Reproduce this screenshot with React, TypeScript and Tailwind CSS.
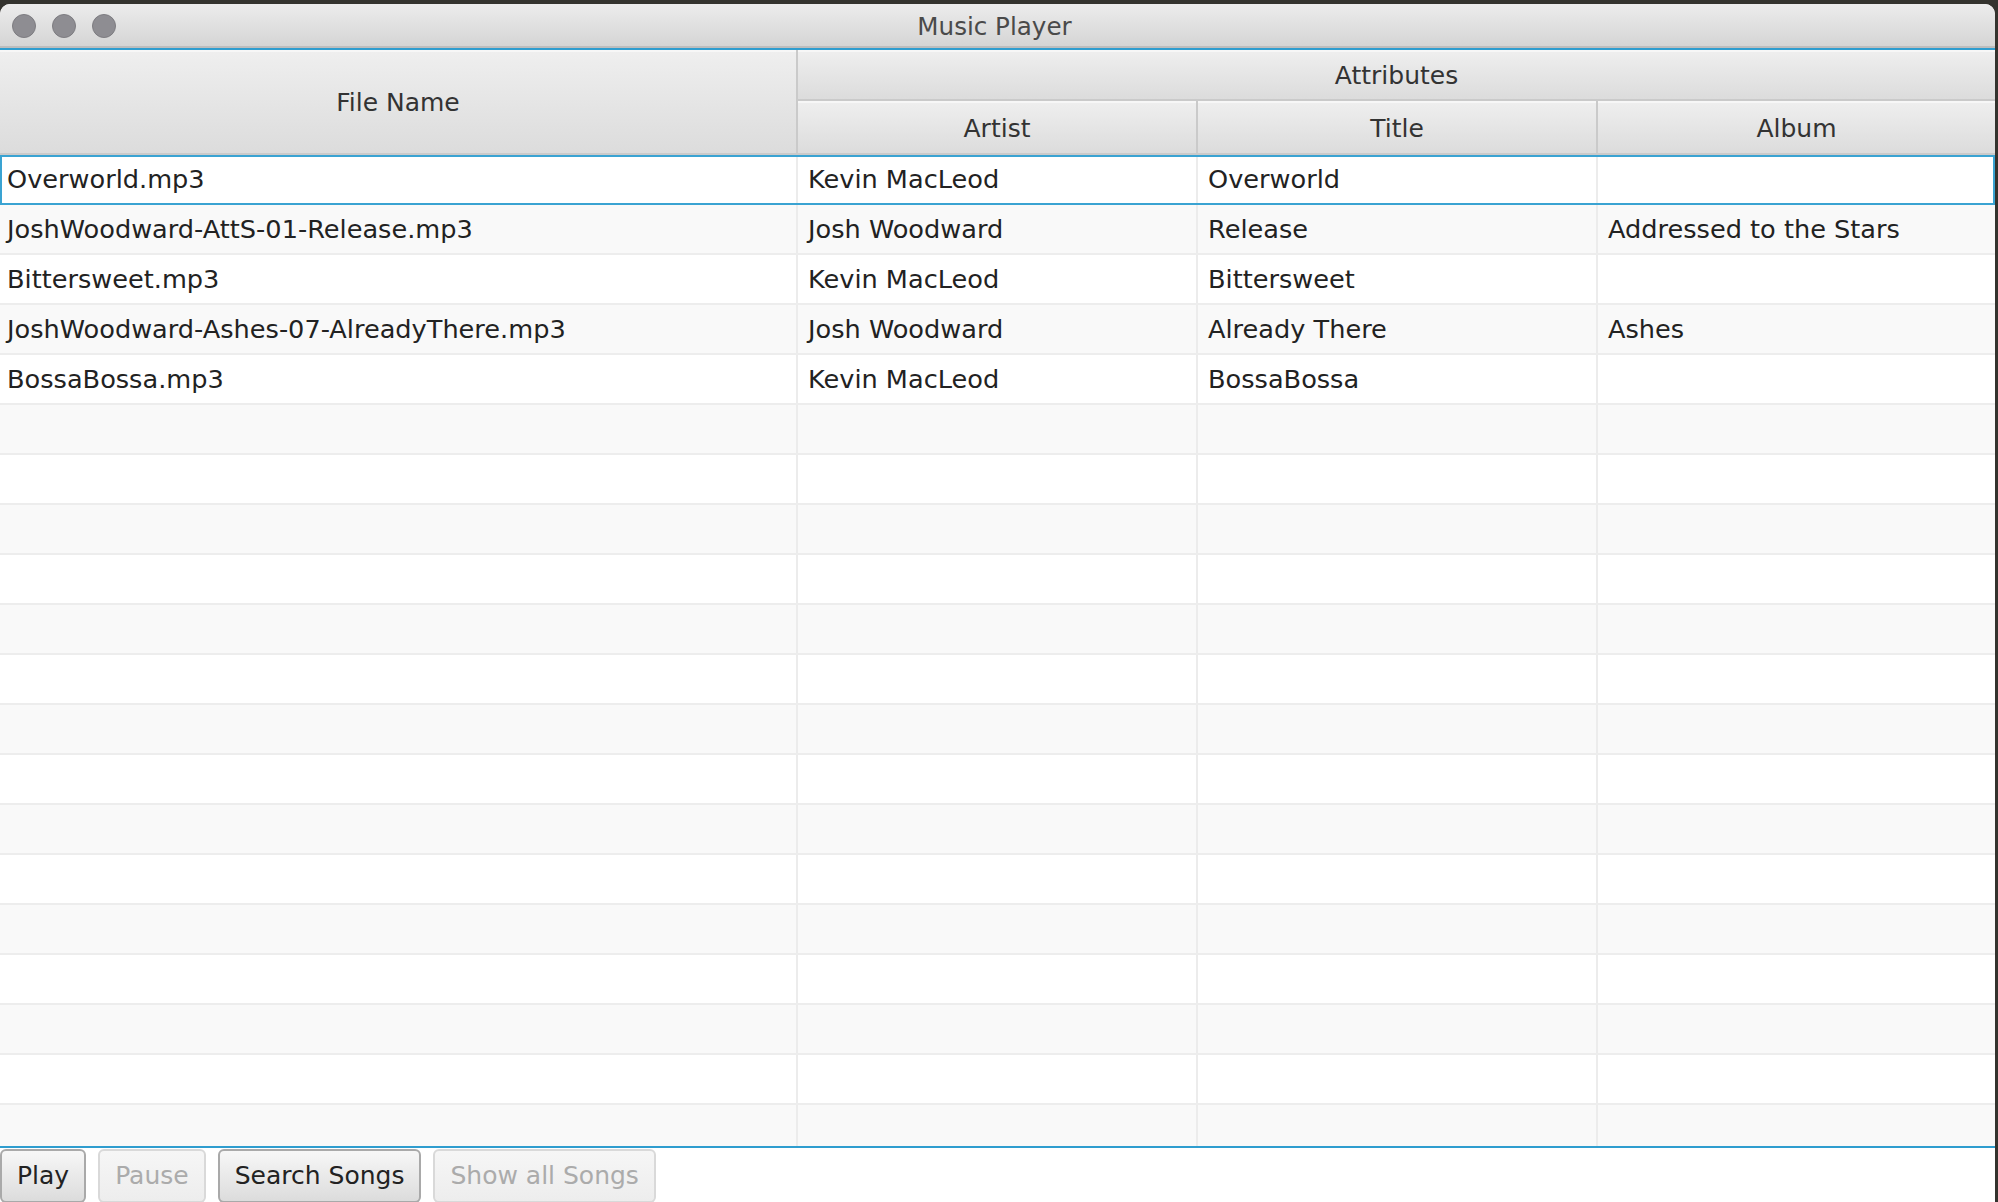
import React from "react";

const rows: string[][] = [
  ["Overworld.mp3", "Kevin MacLeod", "Overworld", ""],
  ["JoshWoodward-AttS-01-Release.mp3", "Josh Woodward", "Release", "Addressed to the Stars"],
  ["Bittersweet.mp3", "Kevin MacLeod", "Bittersweet", ""],
  ["JoshWoodward-Ashes-07-AlreadyThere.mp3", "Josh Woodward", "Already There", "Ashes"],
  ["BossaBossa.mp3", "Kevin MacLeod", "BossaBossa", ""],
];
while (rows.length < 20) rows.push(["", "", "", ""]);

const head =
  "flex items-center justify-center pt-[3px] bg-gradient-to-b from-[#efefef] to-[#dcdcdc] border-r-2 border-b-2 border-[#cacaca] shadow-[inset_0_2px_0_#f7f7f7] text-[#333]";

function Btn({ children, disabled }: { children: React.ReactNode; disabled?: boolean }) {
  const style = disabled
    ? "border-[#d9d9d9] from-[#f6f6f6] to-[#ededed] text-[#ababab]"
    : "border-[#a9a9a9] from-[#f7f7f7] to-[#dcdcdc] text-[#222]";
  return (
    <button
      className={`h-[54px] rounded-[6px] border-2 bg-gradient-to-b px-[15px] pb-[2px] text-[25px] leading-none ${style}`}
    >
      {children}
    </button>
  );
}

export default function App() {
  return (
    <div
      className="w-[1998px] h-[1202px] overflow-hidden bg-[#34332e] pt-[4px] pr-[3px]"
      style={{ fontFamily: '"DejaVu Sans", "Liberation Sans", sans-serif' }}
    >
      <div className="flex h-full flex-col overflow-hidden rounded-t-[10px] bg-white">
        {/* title bar */}
        <div className="relative flex h-[44px] shrink-0 items-center justify-center border-b-2 border-[#bdbdbd] bg-gradient-to-b from-[#ececec] to-[#d5d5d5] pt-[4px] pr-[6px]">
          <div className="absolute left-[12px] top-[10px] flex gap-[16px]">
            {[0, 1, 2].map((i) => (
              <span key={i} className="h-[24px] w-[24px] rounded-full border border-[#7d7c80] bg-[#8e8d92]" />
            ))}
          </div>
          <span className="text-[24.6px] text-[#4a4a4a]">Music Player</span>
        </div>

        {/* table */}
        <div className="flex flex-1 flex-col overflow-hidden border-y-2 border-[#2f9dcf]">
          <div className="grid shrink-0 grid-cols-[798px_400px_400px_1fr] grid-rows-[51px_54px] text-[25px]">
            <div className={`${head} row-span-2`}>File Name</div>
            <div className={`${head} col-span-3 !border-r-0`}>Attributes</div>
            <div className={head}>Artist</div>
            <div className={head}>Title</div>
            <div className={`${head} !border-r-0`}>Album</div>
          </div>
          <div className="flex-1 overflow-hidden">
            {rows.map((r, i) => (
              <div
                key={i}
                className={`relative grid h-[50px] grid-cols-[798px_400px_400px_1fr] border-b-2 border-[#ededed] text-[25.6px] text-[#222] ${
                  i % 2 === 1 ? "bg-[#f9f9f9]" : "bg-white"
                }`}
              >
                {r.map((c, j) => (
                  <div
                    key={j}
                    className={`flex items-center whitespace-nowrap ${j === 0 ? "pl-[7px]" : "pl-[10px]"} ${
                      j < 3 ? "border-r-2 border-[#ececec]" : ""
                    }`}
                  >
                    {c}
                  </div>
                ))}
                {i === 0 && (
                  <div className="pointer-events-none absolute inset-x-0 top-0 bottom-[-2px] border-2 border-[#3aa3d2]" />
                )}
              </div>
            ))}
          </div>
        </div>

        {/* buttons */}
        <div className="flex shrink-0 gap-[12px] pt-[1px] h-[54px]">
          <Btn>Play</Btn>
          <Btn disabled>Pause</Btn>
          <Btn>Search Songs</Btn>
          <Btn disabled>Show all Songs</Btn>
        </div>
      </div>
    </div>
  );
}
